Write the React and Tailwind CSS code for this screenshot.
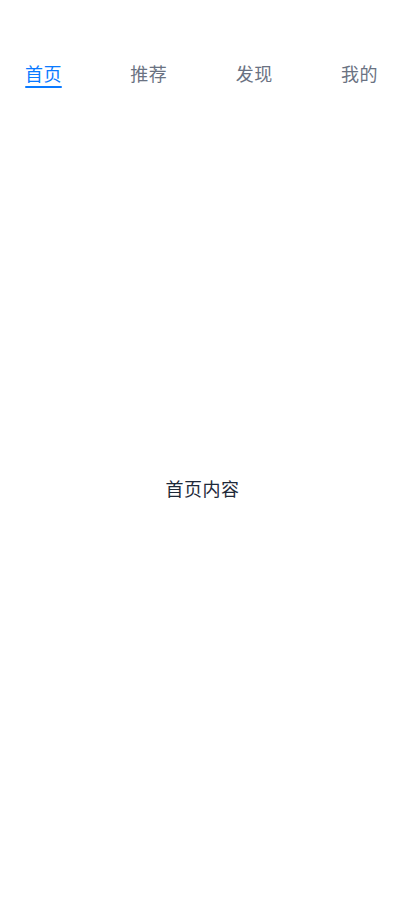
import React, { useState } from 'react';

const TABS = [
  { id: 'home', label: '首页', content: '首页内容' },
  { id: 'rec', label: '推荐', content: '推荐内容' },
  { id: 'find', label: '发现', content: '发现内容' },
  { id: 'me', label: '我的', content: '我的内容' },
];

export default function App() {
  const [tab, setTab] = useState('home');
  const current = TABS.find(t => t.id === tab);

  return (
    <div className="h-[908px] w-full bg-white flex flex-col font-['Noto_Sans_CJK_SC',sans-serif]">
      {/* Tab bar */}
      <nav className="flex justify-between pl-[25px] pr-[27px] pt-[61px]">
        {TABS.map(t => (
          <button
            key={t.id}
            onClick={() => setTab(t.id)}
            className="flex flex-col items-stretch"
          >
            <span
              className={`text-[18px] leading-[24px] tracking-[0.5px] ${
                tab === t.id ? 'text-[#0a7aff]' : 'text-gray-500'
              }`}
            >
              {t.label}
            </span>
            <span
              className={`mt-[1px] h-[2px] rounded-full ${
                tab === t.id ? 'bg-[#0a7aff]' : 'bg-transparent'
              }`}
            />
          </button>
        ))}
      </nav>

      {/* Content */}
      <main className="flex-1 flex items-center justify-center pb-[20px]">
        <p className="text-[18px] leading-[24px] tracking-[0.5px] text-gray-800">{current.content}</p>
      </main>
    </div>
  );
}
